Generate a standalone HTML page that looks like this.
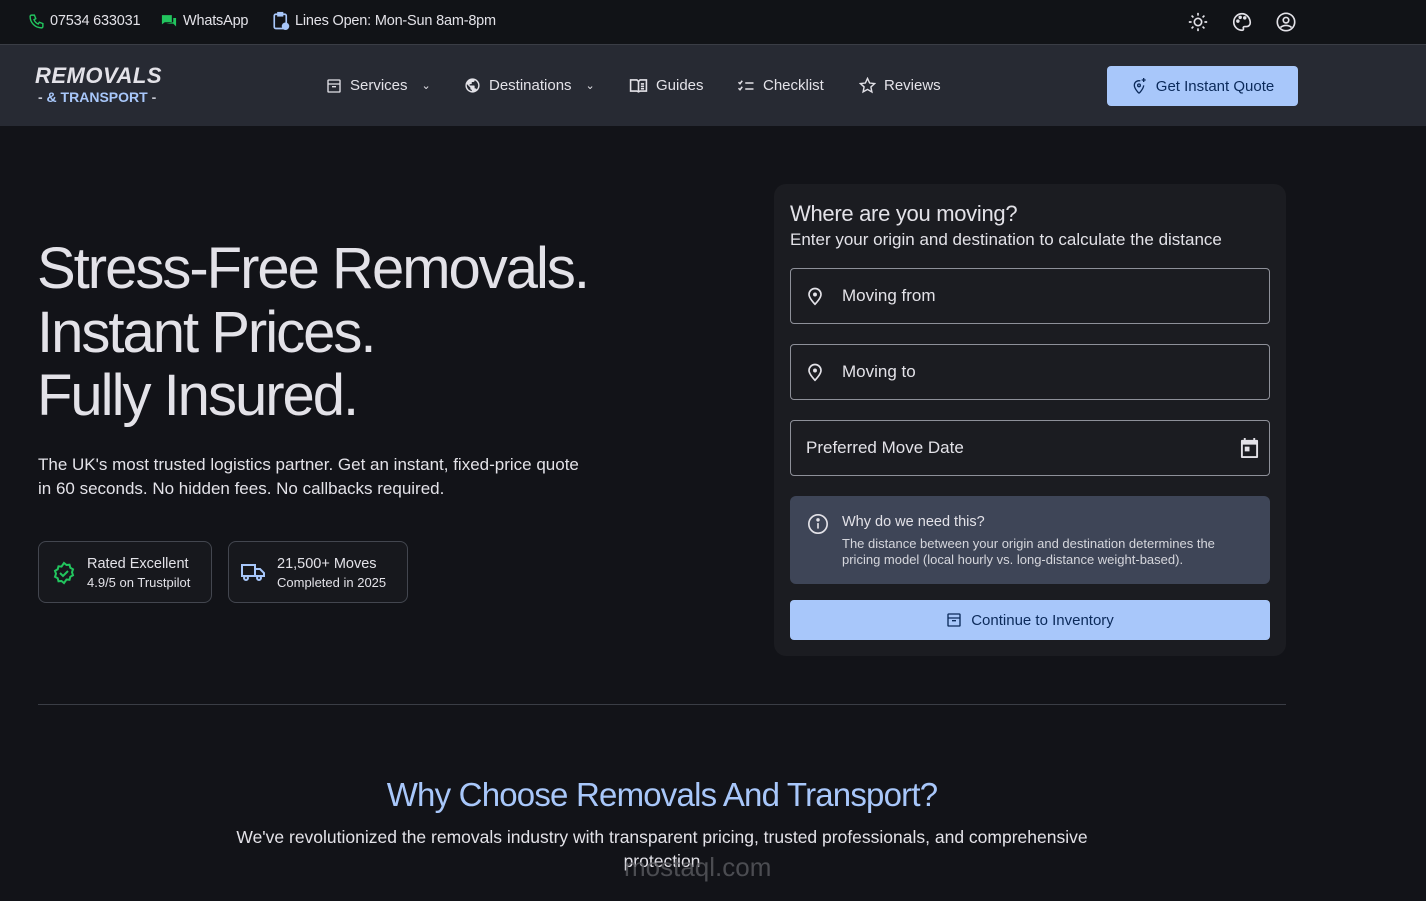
<!DOCTYPE html>
<html><head><meta charset="utf-8"><style>
*{box-sizing:border-box;margin:0;padding:0}
body{width:1426px;height:901px;overflow:hidden;background:#121318;font-family:"Liberation Sans",sans-serif;color:#e3e2e8;position:relative}
.top{position:absolute;left:0;top:0;width:1426px;height:45px;background:#111317;border-bottom:1px solid #3a3d45}
.top span{position:absolute;top:13px;font-size:14.5px;color:#e3e2e8;letter-spacing:-0.2px}
.nav{position:absolute;left:0;top:45px;width:1426px;height:81px;background:#272a33}
.nav .it{position:absolute;top:32px;font-size:15px;color:#e3e2e8;display:flex;align-items:center;gap:8px}
.abs{position:absolute}
svg{display:block}
.btn{background:#a8c7fa;color:#0b2a5a;border-radius:4px;display:flex;align-items:center;justify-content:center;gap:9px;font-size:15px}
.field{position:absolute;left:790px;width:480px;height:56px;border:1px solid #8e9099;border-radius:4px;display:flex;align-items:center;font-size:17px;color:#e3e2e8}
.stat{position:absolute;top:541px;height:62px;border:1px solid #43464f;border-radius:8px;background:#17181d}
</style></head><body>
<div class="top">
<svg class="abs" style="left:28px;top:13px" width="17" height="17" viewBox="0 0 24 24" fill="none" stroke="#22c55e" stroke-width="2"><path d="M5 3h4l2 5-2.5 1.5a11 11 0 0 0 6 6L16 13l5 2v4a2 2 0 0 1-2 2A16 16 0 0 1 3 5a2 2 0 0 1 2-2"/></svg>
<span style="left:50px">07534 633031</span>
<svg class="abs" style="left:160px;top:13px" width="18" height="17" viewBox="0 0 24 24" fill="#22c55e"><path d="M2 3h14v10H6l-4 3z M8 15h10l4 4V7h-4v6"/></svg>
<span style="left:183px">WhatsApp</span>
<svg class="abs" style="left:272px;top:11px" width="18" height="20" viewBox="0 0 24 26" fill="none" stroke="#a8c7fa" stroke-width="2.2"><rect x="3" y="4" width="16" height="19" rx="2"/><rect x="8" y="2" width="6" height="4" fill="#a8c7fa"/><circle cx="18" cy="20" r="5" fill="#a8c7fa" stroke="none"/></svg>
<span style="left:295px">Lines Open: Mon-Sun 8am-8pm</span>
<svg class="abs" style="left:1187px;top:11px" width="22" height="22" viewBox="0 0 24 24" fill="none" stroke="#e3e2e8" stroke-width="1.8"><circle cx="12" cy="12" r="4"/><path d="M12 2v3M12 19v3M2 12h3M19 12h3M5 5l2 2M17 17l2 2M5 19l2-2M17 7l2-2"/></svg>
<svg class="abs" style="left:1231px;top:11px" width="22" height="22" viewBox="0 0 24 24" fill="none" stroke="#e3e2e8" stroke-width="1.8"><path d="M12 3a9 9 0 0 0 0 18c1.5 0 2-1 1.5-2s0-2 1.5-2h2a4 4 0 0 0 4-4c0-5.5-4-10-9-10z"/><circle cx="7.5" cy="11" r="1" fill="#e3e2e8"/><circle cx="10" cy="7" r="1" fill="#e3e2e8"/><circle cx="15" cy="7.5" r="1" fill="#e3e2e8"/></svg>
<svg class="abs" style="left:1275px;top:11px" width="22" height="22" viewBox="0 0 24 24" fill="none" stroke="#e3e2e8" stroke-width="1.8"><circle cx="12" cy="12" r="9.5"/><circle cx="12" cy="10" r="3"/><path d="M6 18c3-3 9-3 12 0"/></svg>
</div>
<div class="nav">
<div class="abs" style="left:35px;top:18px;font-size:22px;font-weight:bold;font-style:italic;color:#e3e2e8;letter-spacing:0.5px">REMOVALS</div>
<div class="abs" style="left:38px;top:44px;font-size:14px;font-weight:bold;color:#a8c7fa"><span style="color:#c4c6d0">-</span> &amp; TRANSPORT <span style="color:#c4c6d0">-</span></div>
<div class="it" style="left:326px"><svg width="16" height="16" viewBox="0 0 24 24" fill="none" stroke="#e3e2e8" stroke-width="2"><rect x="3" y="3" width="18" height="18" rx="1"/><path d="M3 9h18M9 13h6"/></svg>Services<span style="font-size:11px;margin-left:6px">&#8964;</span></div>
<div class="it" style="left:464px"><svg width="17" height="17" viewBox="0 0 24 24" fill="#e3e2e8"><path d="M12 2a10 10 0 1 0 0 20 10 10 0 0 0 0-20zm-1 17.9A8 8 0 0 1 4.2 10L9 15v1a2 2 0 0 0 2 2zm6.9-2.5A2 2 0 0 0 16 16h-1v-3a1 1 0 0 0-1-1H8v-2h2a1 1 0 0 0 1-1V7h2a2 2 0 0 0 2-2v-.4a8 8 0 0 1 2.9 12.8z"/></svg>Destinations<span style="font-size:11px;margin-left:6px">&#8964;</span></div>
<div class="it" style="left:629px"><svg width="19" height="15" viewBox="0 0 24 18" fill="none" stroke="#e3e2e8" stroke-width="2"><path d="M2 2h8l2 2 2-2h8v14h-8l-2 1-2-1H2z M12 4v13M15 7h4M15 10h4M15 13h4"/></svg>Guides</div>
<div class="it" style="left:737px"><svg width="18" height="14" viewBox="0 0 24 18" fill="none" stroke="#e3e2e8" stroke-width="2"><path d="M2 4l2 2 3-4M2 12l2 2 3-4M11 5h11M11 13h11"/></svg>Checklist</div>
<div class="it" style="left:859px"><svg width="17" height="17" viewBox="0 0 24 24" fill="none" stroke="#e3e2e8" stroke-width="2"><path d="M12 2l3 6.5 7 .8-5.2 4.8 1.4 7L12 17.5 5.8 21l1.4-7L2 9.3l7-.8z"/></svg>Reviews</div>
<div class="btn abs" style="left:1107px;top:21px;width:191px;height:40px"><svg width="16" height="18" viewBox="0 0 24 26" fill="none" stroke="#0b2a5a" stroke-width="2"><path d="M12 24s-7-7-7-12a7 7 0 0 1 9-6.7"/><path d="M12 24s7-7 7-12"/><circle cx="12" cy="12" r="2"/><path d="M19 1v6M16 4h6"/></svg>Get Instant Quote</div>
</div>

<div class="abs" style="left:37px;top:237px;font-size:58px;line-height:63.5px;letter-spacing:-2px;color:#e3e2e8">Stress-Free Removals.<br>Instant Prices.<br>Fully Insured.</div>
<div class="abs" style="left:38px;top:453px;font-size:17px;line-height:24px;color:#e3e2e8;width:552px">The UK's most trusted logistics partner. Get an instant, fixed-price quote in 60 seconds. No hidden fees. No callbacks required.</div>

<div class="stat" style="left:38px;width:174px">
<svg class="abs" style="left:13px;top:19px" width="24" height="24" viewBox="0 0 24 24" fill="none" stroke="#22c55e" stroke-width="2"><path d="M12 2l2.5 2 3-.3.8 3 2.7 1.6-1 3 1 3-2.7 1.5-.8 3-3-.3L12 22l-2.5-2-3 .3-.8-3L3 15.8l1-3-1-3 2.7-1.5.8-3 3 .3z"/><path d="M8 12l3 3 5-5"/></svg>
<div class="abs" style="left:48px;top:14px;font-size:14.5px;color:#e3e2e8">Rated Excellent</div>
<div class="abs" style="left:48px;top:33px;font-size:13px;color:#e3e2e8">4.9/5 on Trustpilot</div>
</div>
<div class="stat" style="left:228px;width:180px">
<svg class="abs" style="left:12px;top:20px" width="24" height="20" viewBox="0 0 24 20" fill="none" stroke="#a8c7fa" stroke-width="2"><path d="M1 3h13v11H1zM14 7h5l4 4v3h-9"/><circle cx="5" cy="16" r="2" fill="#17181d"/><circle cx="18" cy="16" r="2" fill="#17181d"/></svg>
<div class="abs" style="left:48px;top:14px;font-size:14.5px;color:#e3e2e8">21,500+ Moves</div>
<div class="abs" style="left:48px;top:33px;font-size:13px;color:#e3e2e8">Completed in 2025</div>
</div>

<div class="abs" style="left:774px;top:184px;width:512px;height:472px;background:#1b1c21;border-radius:12px"></div>
<div class="abs" style="left:790px;top:201px;font-size:22px;color:#e3e2e8;letter-spacing:-0.3px">Where are you moving?</div>
<div class="abs" style="left:790px;top:230px;font-size:17px;color:#e3e2e8">Enter your origin and destination to calculate the distance</div>
<div class="field" style="top:268px"><svg style="margin-left:15px" width="18" height="20" viewBox="0 0 24 26" fill="none" stroke="#e3e2e8" stroke-width="2.2"><path d="M12 24s-8-8-8-13a8 8 0 0 1 16 0c0 5-8 13-8 13z"/><circle cx="12" cy="11" r="1.5" fill="#e3e2e8"/></svg><span style="margin-left:18px">Moving from</span></div>
<div class="field" style="top:344px"><svg style="margin-left:15px" width="18" height="20" viewBox="0 0 24 26" fill="none" stroke="#e3e2e8" stroke-width="2.2"><path d="M12 24s-8-8-8-13a8 8 0 0 1 16 0c0 5-8 13-8 13z"/><circle cx="12" cy="11" r="1.5" fill="#e3e2e8"/></svg><span style="margin-left:18px">Moving to</span></div>
<div class="field" style="top:420px"><span style="margin-left:15px">Preferred Move Date</span><svg style="position:absolute;right:10px;top:17px" width="19" height="20" viewBox="0 0 20 21" fill="#e3e2e8"><path d="M4 0h2v2h8V0h2v2h2a1 1 0 0 1 1 1v17a1 1 0 0 1-1 1H2a1 1 0 0 1-1-1V3a1 1 0 0 1 1-1h2zM3 7v12h14V7zm2 2h5v5H5z"/></svg></div>
<div class="abs" style="left:790px;top:496px;width:480px;height:88px;background:#3e4557;border-radius:6px">
<svg class="abs" style="left:17px;top:17px" width="22" height="22" viewBox="0 0 24 24" fill="none" stroke="#e3e2e8" stroke-width="1.8"><circle cx="12" cy="12" r="10"/><path d="M12 11v6"/><circle cx="12" cy="7.5" r="1" fill="#e3e2e8"/></svg>
<div class="abs" style="left:52px;top:18px;font-size:14.5px;color:#e3e2e8">Why do we need this?</div>
<div class="abs" style="left:52px;top:40px;font-size:13px;line-height:16px;color:#d5d6dc;width:395px">The distance between your origin and destination determines the pricing model (local hourly vs. long-distance weight-based).</div>
</div>
<div class="btn abs" style="left:790px;top:600px;width:480px;height:40px"><svg width="16" height="16" viewBox="0 0 24 24" fill="none" stroke="#0b2a5a" stroke-width="2"><rect x="3" y="3" width="18" height="18" rx="1"/><path d="M3 9h18M9 13h6"/></svg>Continue to Inventory</div>

<div class="abs" style="left:38px;top:704px;width:1248px;height:1px;background:#3a3d45"></div>
<div class="abs" style="left:0;top:776px;width:1324px;text-align:center;font-size:33px;color:#a8c7fa;letter-spacing:-0.8px">Why Choose Removals And Transport?</div>
<div class="abs" style="left:222px;top:825px;width:880px;text-align:center;font-size:17.5px;line-height:24px;color:#e3e2e8">We've revolutionized the removals industry with transparent pricing, trusted professionals, and comprehensive protection</div>
<div class="abs" style="left:624px;top:852px;font-size:26px;color:#5a5b60;opacity:0.8">mostaql.com</div>
</body></html>
